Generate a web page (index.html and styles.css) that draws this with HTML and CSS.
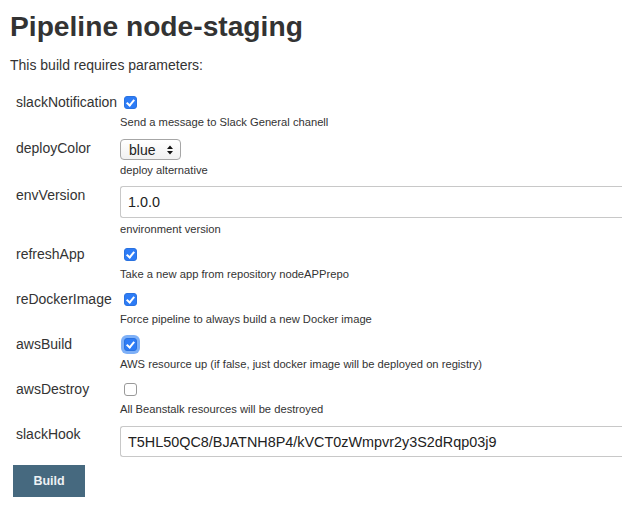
FILE: index.html
```html
<!DOCTYPE html>
<html>
<head>
<meta charset="utf-8">
<link rel="stylesheet" href="styles.css">
</head>
<body>
<h1 class="title">Pipeline node-staging</h1>
<p class="intro">This build requires parameters:</p>
<form class="params">
  <div class="param param-first">
    <span class="name">slackNotification</span>
    <div class="main">
      <div class="line"><input type="checkbox" class="cb" checked></div>
      <div class="desc">Send a message to Slack General chanell</div>
    </div>
  </div>
  <div class="param">
    <span class="name">deployColor</span>
    <div class="main">
      <span class="select-wrap">
        <select class="select"><option>blue</option><option>green</option></select>
        <svg class="arrows" width="8" height="12" viewBox="0 0 8 12"><path d="M1 5 L4 1.5 L7 5 Z M1 7 L4 10.5 L7 7 Z" fill="#111"/></svg>
      </span>
      <div class="desc desc-select">deploy alternative</div>
    </div>
  </div>
  <div class="param">
    <span class="name">envVersion</span>
    <div class="main">
      <input type="text" class="text" value="1.0.0">
      <div class="desc">environment version</div>
    </div>
  </div>
  <div class="param">
    <span class="name">refreshApp</span>
    <div class="main">
      <div class="line"><input type="checkbox" class="cb" checked></div>
      <div class="desc">Take a new app from repository nodeAPPrepo</div>
    </div>
  </div>
  <div class="param">
    <span class="name">reDockerImage</span>
    <div class="main">
      <div class="line"><input type="checkbox" class="cb" checked></div>
      <div class="desc">Force pipeline to always build a new Docker image</div>
    </div>
  </div>
  <div class="param">
    <span class="name">awsBuild</span>
    <div class="main">
      <div class="line"><input type="checkbox" class="cb focused" checked></div>
      <div class="desc">AWS resource up (if false, just docker image will be deployed on registry)</div>
    </div>
  </div>
  <div class="param">
    <span class="name">awsDestroy</span>
    <div class="main">
      <div class="line"><input type="checkbox" class="cb"></div>
      <div class="desc">All Beanstalk resources will be destroyed</div>
    </div>
  </div>
  <div class="param param-last">
    <span class="name">slackHook</span>
    <div class="main">
      <input type="text" class="text text-hook" value="T5HL50QC8/BJATNH8P4/kVCT0zWmpvr2y3S2dRqp03j9">
    </div>
  </div>
  <div class="actions">
    <button type="button" class="build">Build</button>
  </div>
</form>
</body>
</html>
```

FILE: styles.css
```css
html {
  overflow: hidden;
  background: #fff;
}
body {
  margin: 0;
  padding: 10px 0 0 10px;
  font-family: "Liberation Sans", Arial, sans-serif;
  color: #333;
}
.title {
  margin: 0;
  font-size: 28.2px;
  line-height: 32px;
  font-weight: bold;
  color: #333;
}
.intro {
  margin: 14px 0 0 0;
  font-size: 14px;
  line-height: 18px;
}
.params {
  margin-top: 19px;
}
.param {
  display: grid;
  grid-template-columns: 104px 1fr;
  padding-left: 6px;
  margin-bottom: 9px;
}
.param-first {
  margin-bottom: 10px;
}
.param-last {
  margin-bottom: 0;
}
.name {
  font-size: 14px;
  line-height: 18px;
}
.main {
  display: flex;
  flex-direction: column;
  align-items: flex-start;
  min-width: 0;
}
.line {
  height: 18px;
  display: flex;
  align-items: center;
  padding-left: 4px;
}
.desc {
  margin-top: 4px;
  font-size: 11.2px;
  line-height: 14px;
  color: #333;
}
.desc-select {
  margin-top: 3px;
}
.cb {
  appearance: none;
  -webkit-appearance: none;
  margin: 0;
  width: 13px;
  height: 13px;
  border: 1px solid #9a9a9a;
  border-radius: 3px;
  background: #fff;
  position: relative;
  box-sizing: border-box;
}
.cb:checked {
  background: #2d7cf6;
  border-color: #2a72e0;
}
.cb:checked::after {
  content: "";
  position: absolute;
  left: 3.4px;
  top: 1px;
  width: 3px;
  height: 6px;
  border-right: 2px solid #fff;
  border-bottom: 2px solid #fff;
  transform: rotate(40deg);
}
.cb.focused {
  box-shadow: 0 0 0 3px #7eb0f7;
}
.select-wrap {
  position: relative;
  display: inline-block;
}
.select {
  appearance: none;
  -webkit-appearance: none;
  width: 61px;
  height: 21px;
  margin: 0;
  padding: 0 0 0 8px;
  border: 1px solid #a6a6a6;
  border-radius: 4px;
  background: linear-gradient(#ffffff, #f1f1f1);
  font-family: "Liberation Sans", Arial, sans-serif;
  font-size: 14px;
  color: #222;
  box-sizing: border-box;
}
.arrows {
  position: absolute;
  right: 7px;
  top: 5px;
  pointer-events: none;
}
.text {
  width: 100%;
  height: 32px;
  margin: 0;
  padding: 0 7px;
  border: 1px solid #c8c8c8;
  border-right: none;
  border-radius: 3px 0 0 3px;
  box-sizing: border-box;
  font-family: "Liberation Sans", Arial, sans-serif;
  font-size: 14.4px;
  color: #222;
  background: #fff;
}
.text-hook {
  height: 31px;
  margin-top: 1px;
}
.actions {
  margin-top: 8px;
  padding-left: 3px;
}
.build {
  width: 72px;
  height: 32px;
  margin: 0;
  border: none;
  border-radius: 0;
  background: #46697f;
  color: #eef2f5;
  font-family: "Liberation Sans", Arial, sans-serif;
  font-size: 12.5px;
  font-weight: bold;
}
```
